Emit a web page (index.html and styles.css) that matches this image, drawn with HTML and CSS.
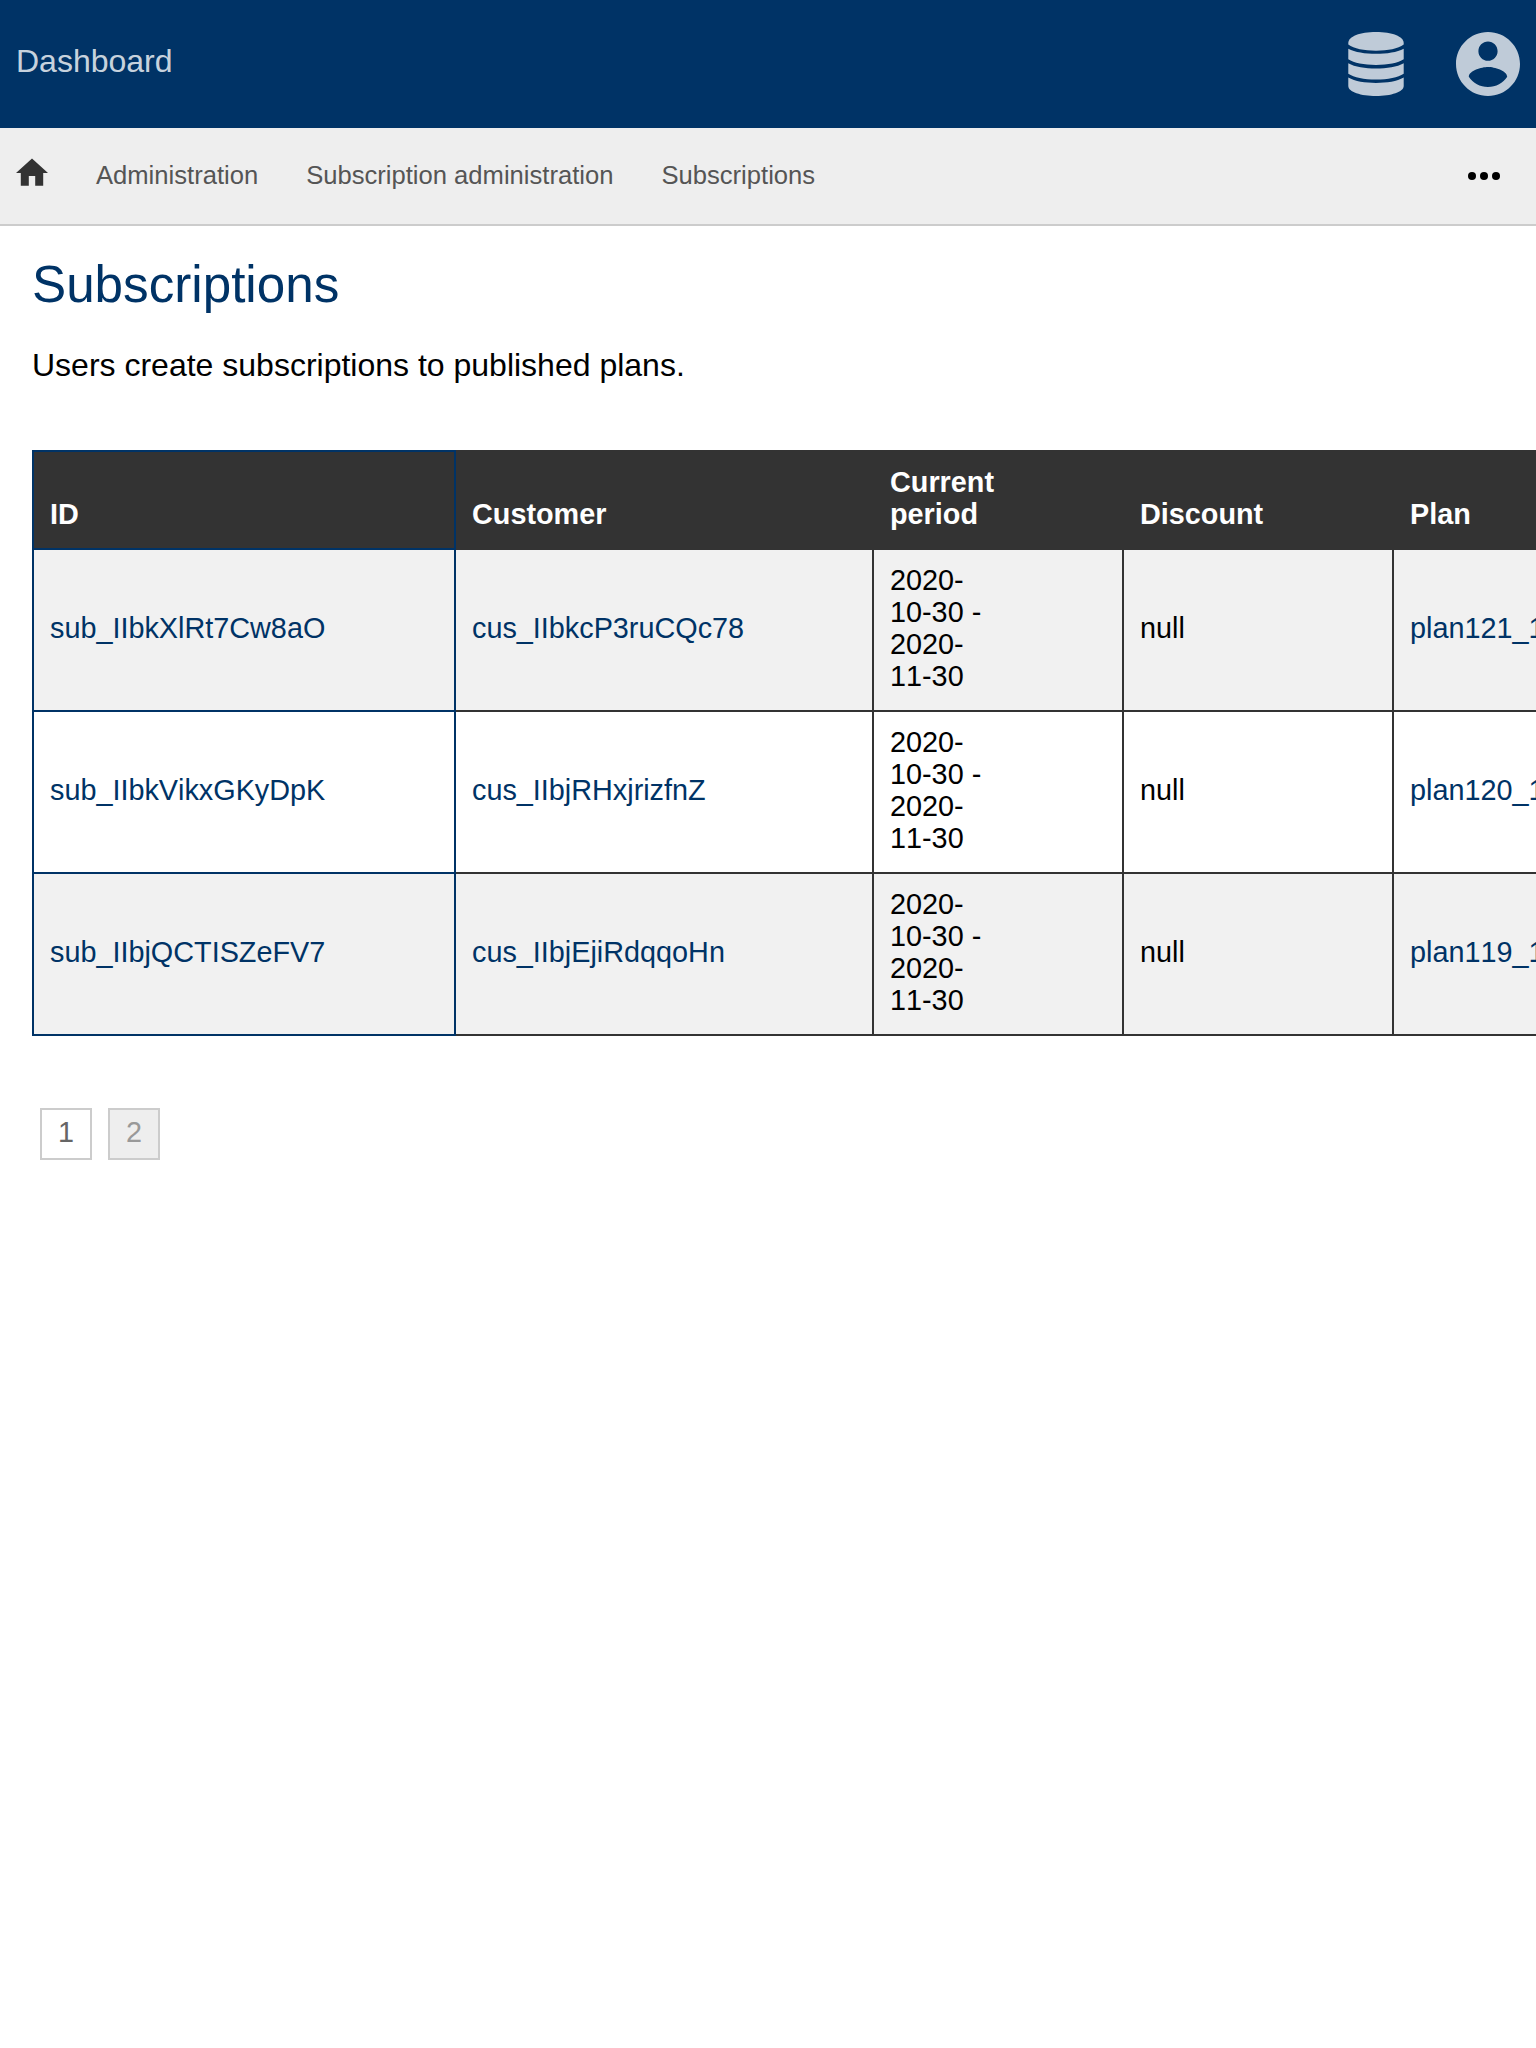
FILE: index.html
```html
<!DOCTYPE html>
<html lang="en">
<head>
<meta charset="utf-8">
<title>Subscriptions</title>
<link rel="stylesheet" href="styles.css">
</head>
<body>
<header class="header">
  <a class="brand">Dashboard</a>
  <div class="menus">
    <svg class="icon-db" viewBox="0 0 56 64"><path d="M.3 11C.3 4.500 12 0 28 0s27.700 4.500 27.700 11v1.500C50 16.800 40 18.700 28 18.700S6 16.800.3 12.500z"/><path d="M.3 16.700C7 20.200 17 21.800 28 21.800s21-1.600 27.700-5.100V27.300C50 31 40 32.900 28 32.900S6 31 .3 27.300z"/><path d="M.3 31.200C7 34.900 17 36.500 28 36.500s21-1.600 27.700-5.300V41.700C50 45.500 40 47.500 28 47.500S6 45.500.3 41.700z"/><path d="M.3 45.600C7 49.400 17 51 28 51s21-1.600 27.700-5.400V54C55.700 60 43 64 28 64S.3 60 .3 54z"/></svg>
    <svg class="icon-user" viewBox="2 2 20 20"><path d="M12 2C6.480 2 2 6.480 2 12s4.480 10 10 10 10-4.480 10-10S17.520 2 12 2zm0 3c1.660 0 3 1.340 3 3s-1.340 3-3 3-3-1.340-3-3 1.340-3 3-3zm0 14.200c-2.500 0-4.710-1.280-6-3.220.03-1.990 4-3.080 6-3.080 1.990 0 5.970 1.090 6 3.080-1.290 1.940-3.500 3.220-6 3.220z"/></svg>
  </div>
</header>
<nav class="navbar">
  <svg class="icon-home" viewBox="2 2.700 20 17.500"><path d="M10 20v-6h4v6h5v-8h3L12 3 2 12h3v8z"/></svg>
  <a class="crumb">Administration</a>
  <a class="crumb">Subscription administration</a>
  <a class="crumb">Subscriptions</a>
  <svg class="icon-more" viewBox="0 0 32 8"><circle cx="4" cy="4" r="4"/><circle cx="16" cy="4" r="4"/><circle cx="28" cy="4" r="4"/></svg>
</nav>
<main class="content">
  <h1 class="title">Subscriptions</h1>
  <p class="intro">Users create subscriptions to published plans.</p>
  <table class="list">
    <colgroup><col class="col-id"><col class="col-customer"><col class="col-period"><col class="col-discount"><col class="col-plan"></colgroup>
    <thead>
      <tr><th>ID</th><th>Customer</th><th>Current<br>period</th><th>Discount</th><th>Plan</th></tr>
    </thead>
    <tbody>
      <tr><td><a>sub_IIbkXlRt7Cw8aO</a></td><td><a>cus_IIbkcP3ruCQc78</a></td><td>2020-<br>10-30 -<br>2020-<br>11-30</td><td>null</td><td><a>plan121_1</a></td></tr>
      <tr><td><a>sub_IIbkVikxGKyDpK</a></td><td><a>cus_IIbjRHxjrizfnZ</a></td><td>2020-<br>10-30 -<br>2020-<br>11-30</td><td>null</td><td><a>plan120_1</a></td></tr>
      <tr><td><a>sub_IIbjQCTISZeFV7</a></td><td><a>cus_IIbjEjiRdqqoHn</a></td><td>2020-<br>10-30 -<br>2020-<br>11-30</td><td>null</td><td><a>plan119_1</a></td></tr>
    </tbody>
  </table>
  <div class="pages">
    <a class="page current">1</a>
    <a class="page">2</a>
  </div>
</main>
</body>
</html>
```
FILE: styles.css
```css
* { box-sizing: border-box; }

body {
  margin: 0;
  min-height: 2048px;
  background: #fff;
  color: #000;
  font: 32px/36px "Liberation Sans", Arial, sans-serif;
  overflow: hidden;
}

.header {
  display: flex;
  justify-content: space-between;
  height: 128px;
  padding: 32px 16px;
  background: #036;
}
.brand {
  padding-top: 11px;
  color: rgba(255, 255, 255, .8);
}
.menus {
  display: flex;
  gap: 52px;
  fill: rgba(255, 255, 255, .75);
}
.icon-db { width: 56px; height: 64px; }
.icon-user { width: 64px; height: 64px; }

.navbar {
  display: flex;
  align-items: center;
  gap: 48px;
  height: 98px;
  padding: 0 36px 0 16px;
  background: #eee;
  border-bottom: 2px solid #ccc;
  color: #555;
  font-size: 25.6px;
}
.crumb { padding-bottom: 2px; }
.icon-home {
  width: 32px;
  height: 28px;
  margin-bottom: 8px;
  fill: #333;
}
.icon-more {
  width: 32px;
  height: 8px;
  margin-left: auto;
}

.content { padding: 30px 32px; }
.title {
  margin: 0;
  color: #036;
  font-size: 51.2px;
  font-weight: 400;
  line-height: 58px;
}
.intro { margin: 33px 0 0; }

.list {
  width: 1720px;
  margin-top: 67px;
  table-layout: fixed;
  border-collapse: collapse;
  font-size: 28.8px;
  font-kerning: none;
  line-height: 32px;
}
.col-id { width: 422px; }
.col-customer { width: 418px; }
.col-period { width: 250px; }
.col-discount { width: 270px; }
.list th,
.list td {
  padding: 14px 16px 18px;
  border: 2px solid #333;
  text-align: left;
}
.list th {
  background: #333;
  color: #fff;
  vertical-align: bottom;
}
.list th:first-child,
.list td:first-child { border-color: #036; }
.list tbody tr:nth-child(odd) { background: #f1f1f1; }
.list a { color: #036; }

.pages {
  display: flex;
  gap: 16px;
  margin: 72px 8px 0;
}
.page {
  width: 52px;
  height: 52px;
  border: 2px solid #ccc;
  background: #eee;
  color: #999;
  font-size: 28.8px;
  line-height: 44px;
  text-align: center;
}
.page.current {
  background: #fff;
  color: #666;
}
```
